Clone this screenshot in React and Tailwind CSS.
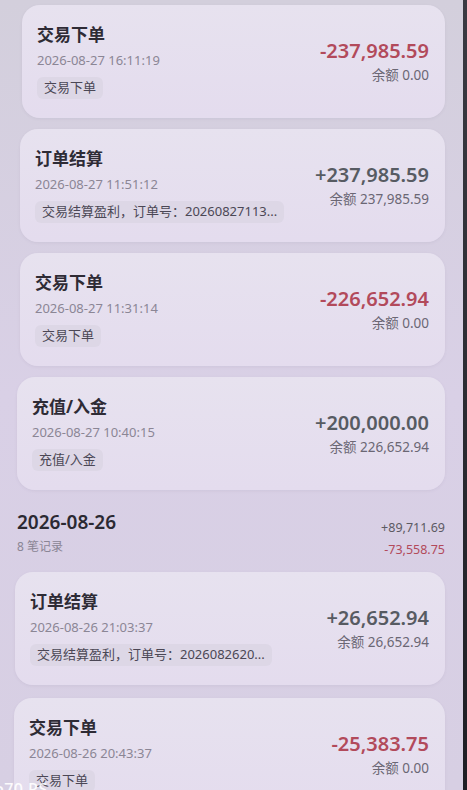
import React from "react";

const FONT = { fontFamily: '"Noto Sans", "Noto Sans CJK SC", sans-serif' };

function Card({ ml, title, date, tag, amount, balance, positive }) {
  return (
    <div
      className={`${ml} mr-[18px] h-[113px] shrink-0 rounded-[18px] bg-gradient-to-b from-[#e7e2ef] to-[#e4dcee] shadow-[0_1px_3px_rgba(120,110,140,0.10)] pl-[15px] pr-[16px] pt-[18px] flex justify-between`}
    >
      <div className="flex flex-col items-start min-w-0">
        <div className="text-[17px] leading-[24px] font-bold text-[#2e2b35]">{title}</div>
        <div className="mt-[4px] text-[13px] leading-[18px] text-[#8b8695]">{date}</div>
        <div className="mt-[8px] h-[22px] flex items-center rounded-[6px] bg-[#ddd7e6] px-[7px] text-[13px] text-[#4b4755] whitespace-nowrap">
          {tag}
        </div>
      </div>
      <div className="flex flex-col items-end pt-[15px] shrink-0">
        <div
          className={`text-[20px] leading-[26px] font-semibold ${positive ? "text-[#575b62]" : "text-[#b24a5b]"}`}
        >
          {amount}
        </div>
        <div className="mt-[2px] text-[13.5px] leading-[18px] text-[#6b6774]">{balance}</div>
      </div>
    </div>
  );
}

export default function App() {
  return (
    <div
      className="relative w-[467px] h-[790px] overflow-hidden flex bg-[#2a2a30]"
      style={FONT}
    >
      <div className="flex-1 h-full overflow-hidden bg-gradient-to-b from-[#d3cfdc] via-[#d9d0e6] to-[#d7cfe3] flex flex-col pt-[5px]">
        <div className="flex flex-col gap-[11px]">
          <Card
            ml="ml-[22px]"
            title="交易下单"
            date="2026-08-27 16:11:19"
            tag="交易下单"
            amount="-237,985.59"
            balance="余额 0.00"
          />
          <Card
            ml="ml-[20px]"
            title="订单结算"
            date="2026-08-27 11:51:12"
            tag="交易结算盈利，订单号：20260827113..."
            amount="+237,985.59"
            balance="余额 237,985.59"
            positive
          />
          <Card
            ml="ml-[20px]"
            title="交易下单"
            date="2026-08-27 11:31:14"
            tag="交易下单"
            amount="-226,652.94"
            balance="余额 0.00"
          />
          <Card
            ml="ml-[17px]"
            title="充值/入金"
            date="2026-08-27 10:40:15"
            tag="充值/入金"
            amount="+200,000.00"
            balance="余额 226,652.94"
            positive
          />
        </div>

        <div className="flex justify-between ml-[17px] mr-[18px] h-[82px] shrink-0">
          <div className="flex flex-col pt-[19px]">
            <div className="text-[19px] leading-[26px] font-semibold text-[#2b2932]">2026-08-26</div>
            <div className="mt-[3px] text-[12px] leading-[18px] text-[#8a8594]">8 笔记录</div>
          </div>
          <div className="flex flex-col items-end pt-[28px]">
            <div className="text-[12.5px] leading-[20px] text-[#5c5a63]">+89,711.69</div>
            <div className="mt-[2px] text-[12.5px] leading-[20px] text-[#b24a5b]">-73,558.75</div>
          </div>
        </div>

        <div className="flex flex-col gap-[13px]">
          <Card
            ml="ml-[15px]"
            title="订单结算"
            date="2026-08-26 21:03:37"
            tag="交易结算盈利，订单号：2026082620..."
            amount="+26,652.94"
            balance="余额 26,652.94"
            positive
          />
          <Card
            ml="ml-[14px]"
            title="交易下单"
            date="2026-08-26 20:43:37"
            tag="交易下单"
            amount="-25,383.75"
            balance="余额 0.00"
          />
        </div>
      </div>
      <div className="w-[4px] h-full bg-gradient-to-b from-[#3a3a42] to-[#1e1e24]" />
      <div className="absolute left-[-4px] bottom-[-9px] text-[16px] leading-[20px] text-white/90 font-medium tracking-wide">
        ɔ70 RS
      </div>
    </div>
  );
}
